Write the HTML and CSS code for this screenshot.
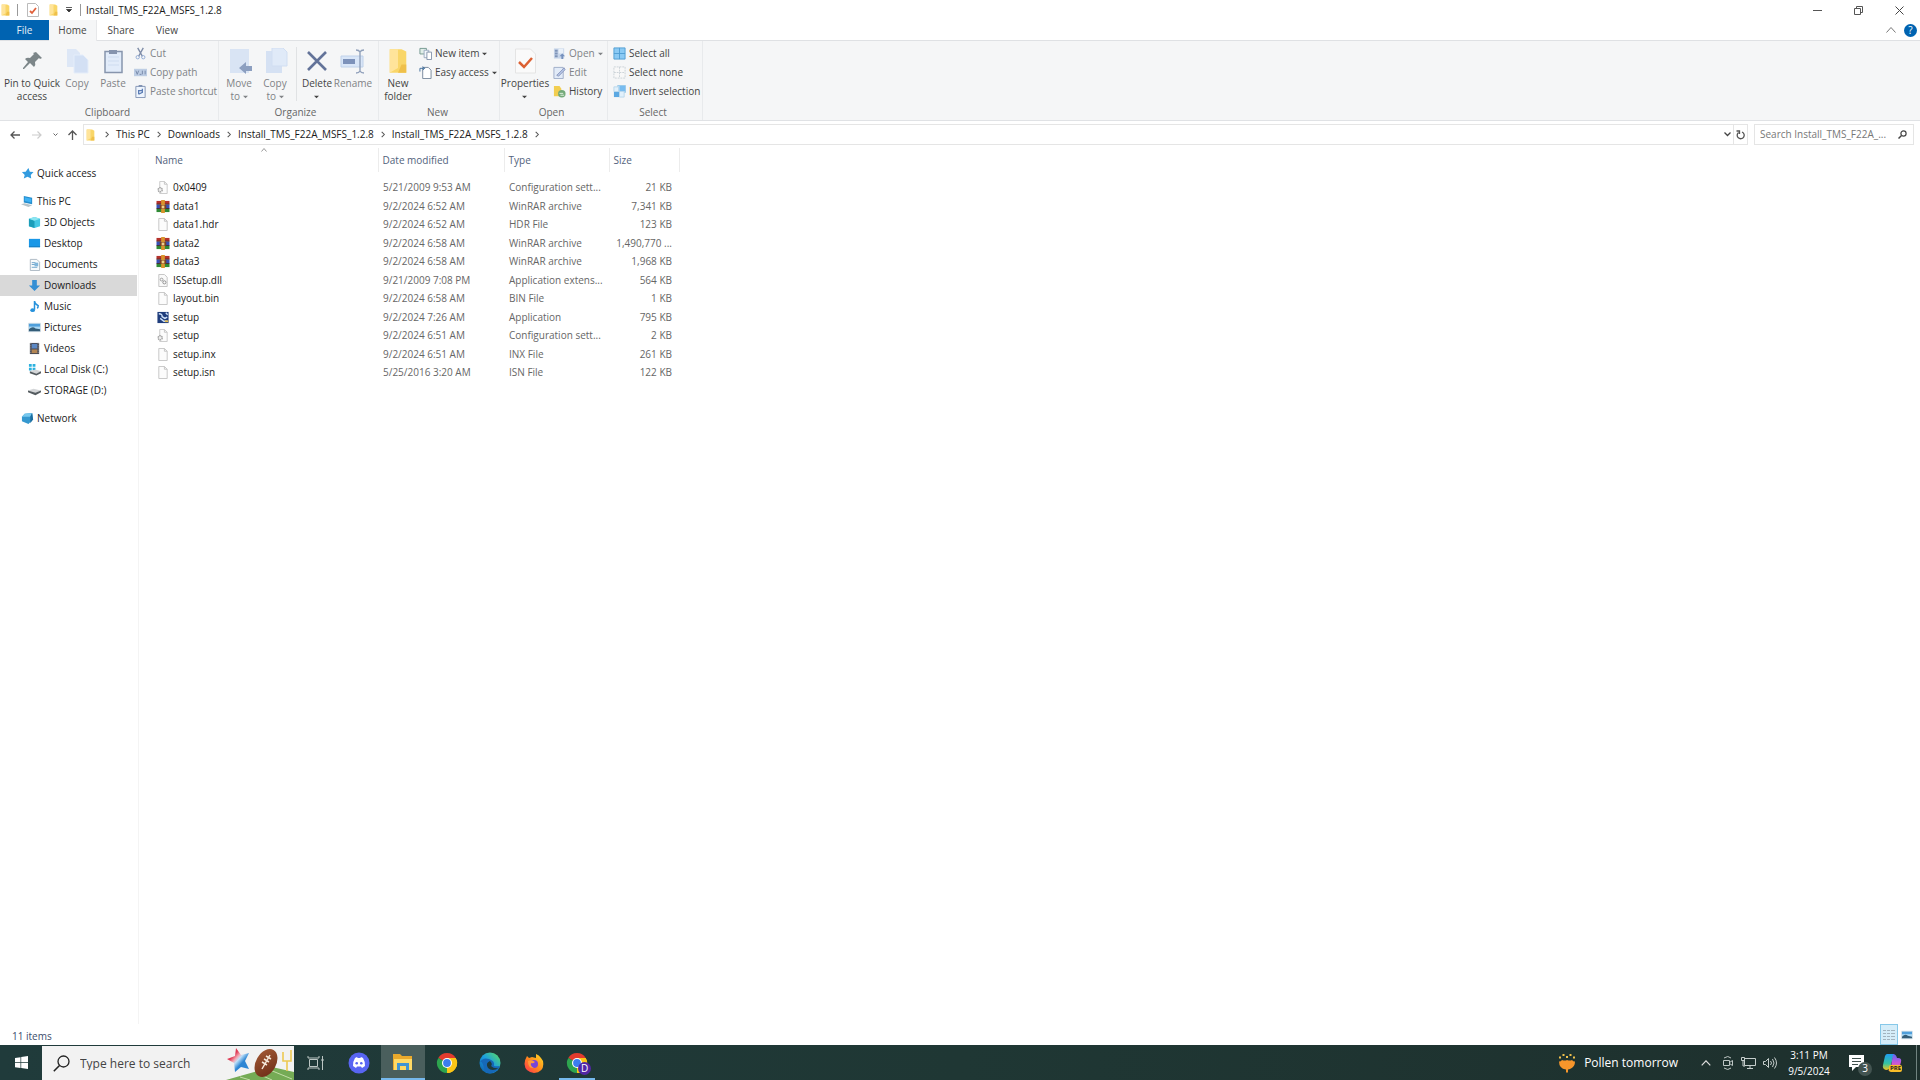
FILE: index.html
```html
<!DOCTYPE html>
<html lang="en">
<head>
    <meta charset="UTF-8">
    <meta name="viewport" content="width=device-width, initial-scale=1.0">
    <title>Install_TMS_F22A_MSFS_1.2.8</title>
    <link rel="stylesheet" href="styles.css">
</head>
<body>
    <!-- shared icons -->
    <svg class="defs" aria-hidden="true">
        <defs>
            <linearGradient id="star-fill" x1="0" y1="0" x2="1" y2="1"><stop offset=".3" stop-color="#df3a55"/><stop offset=".42" stop-color="#f3a9b4"/><stop offset=".5" stop-color="#bfe0f8"/><stop offset=".65" stop-color="#2e86d4"/></linearGradient>
            <linearGradient id="ball-fill" x1="0" y1="0" x2="1" y2="1"><stop offset="0" stop-color="#a45a35"/><stop offset="1" stop-color="#6b2c16"/></linearGradient>
            <linearGradient id="edge-fill" x1="0" y1="1" x2="1" y2="0"><stop offset="0" stop-color="#0c59a4"/><stop offset=".5" stop-color="#1b9de2"/><stop offset="1" stop-color="#5ee25a"/></linearGradient>
            <linearGradient id="fox-fill" x1="1" y1="0" x2="0" y2="1"><stop offset="0" stop-color="#ffe226"/><stop offset=".5" stop-color="#ff8a1c"/><stop offset="1" stop-color="#ff2a55"/></linearGradient>
            <linearGradient id="copilot-left" x1="0" y1="0" x2="0" y2="1"><stop offset="0" stop-color="#1f9cf0"/><stop offset=".6" stop-color="#36c4a0"/><stop offset="1" stop-color="#f3c51c"/></linearGradient>
            <linearGradient id="copilot-right" x1="0" y1="0" x2="0" y2="1"><stop offset="0" stop-color="#5a6cf0"/><stop offset=".5" stop-color="#c455dd"/><stop offset="1" stop-color="#ff8555"/></linearGradient>
        </defs>
        <symbol id="folder" viewBox="0 0 16 22"><path d="M1 1h10l4 2v18H1z" fill="#f9d668"/><path d="M1 1h7v16l-7 4z" fill="#ffe49a"/><path d="M11 14h4v7h-7z" fill="#efc04a"/></symbol>
        <symbol id="page" viewBox="0 0 14 14"><path d="M2.500.5h6l3 3v10h-9z" fill="#fcfcfc" stroke="#c4c4c4"/><path d="M8.500.5v3h3" fill="none" stroke="#c4c4c4"/></symbol>
        <symbol id="config" viewBox="0 0 14 14"><path d="M3.500.5h5l3 3v10h-8z" fill="#fcfcfc" stroke="#c8c8c8"/><path d="M8.500.5v3h3" fill="none" stroke="#c4c4c4"/><circle cx="4" cy="9.500" r="2.200" fill="#eee" stroke="#a2a2a2" stroke-width="1.500" stroke-dasharray="1.500 .6"/></symbol>
        <symbol id="dll" viewBox="0 0 14 14"><path d="M2.500.5h6l3 3v10h-9z" fill="#fafafa" stroke="#c0c0c0"/><circle cx="5.500" cy="6" r="1.500" fill="none" stroke="#999"/><circle cx="8.500" cy="9" r="1.700" fill="none" stroke="#888"/></symbol>
        <symbol id="rar" viewBox="0 0 14 14"><path d="M0 1h14v3.500H0z" fill="#b5312b"/><path d="M0 5h14v4H0z" fill="#3750b5"/><path d="M0 9.500h14V13H0z" fill="#2f8a35"/><path d="M0 4.500h14M0 9.200h14" stroke="#382126"/><path d="M5 0h4v14H5z" fill="#d9942c"/><path d="M3.500 5.500h7v4h-7z" fill="#7b4023"/><path d="M5.500 6h3v3h-3z" fill="#efd28a"/></symbol>
        <symbol id="setup" viewBox="0 0 14 14"><path d="M1 1h12v12H1z" fill="#1f3d7c"/><path d="M2.500 3q4 0 3.500 3l3 2 2.500-1.500M4 8l4 3h3.500M10 2l2 2" fill="none" stroke="#cfe2fa" stroke-width="1.500"/><path d="M9 10h3.500v2H9z" fill="#e3bd55"/></symbol>
        <symbol id="caret" viewBox="0 0 6 4"><path d="M0 .5h6L3 3.500z" fill="currentColor"/></symbol>
        <symbol id="chevron" viewBox="0 0 6 8"><path d="M1.500 1 4.500 4 1.500 7" fill="none" stroke="#555" stroke-width="1.200"/></symbol>
        <symbol id="task-chrome" viewBox="0 0 22 22"><path d="M11 11 2.300 6A10 10 0 0 1 19.700 6z" fill="#e33b2e"/><path d="M11 11 19.700 6A10 10 0 0 1 11 21z" fill="#fbc516"/><path d="M11 11V21A10 10 0 0 1 2.300 6z" fill="#2da44e"/><path d="M11 6h8.700A10 10 0 0 1 11 21l4.300-7.500z" fill="#fbc516"/><circle cx="11" cy="11" r="5" fill="#fff"/><circle cx="11" cy="11" r="3.900" fill="#3b7ded"/></symbol>
        <symbol id="photo" viewBox="0 0 14 12"><path d="M.5 1.500h13v9H.5z" fill="#a9d8f5" stroke="#d5dde3"/><path d="M1 2h12v3H1z" fill="#4f9fdb"/><path d="M1 8q4-4 7-1l5 1v2H1z" fill="#345d78"/></symbol>
    </svg>

    <div class="window">
        <header class="titlebar">
            <svg class="mini-folder"><use href="#folder"/></svg>
            <span class="divider"></span>
            <button class="quick" aria-label="Properties"><svg width="12" height="14" viewBox="0 0 12 14"><path d="M.5.5h8l3 3v10H.5z" fill="#fff" stroke="#bbb"/><path d="m3 8 2 2 4-5" fill="none" stroke="#e0603a" stroke-width="1.800"/></svg></button>
            <button class="quick" aria-label="New folder"><svg class="mini-folder"><use href="#folder"/></svg></button>
            <button class="customize" aria-label="Customize toolbar"><svg width="6" height="6" viewBox="0 0 6 6"><path d="M0 .5h6M.5 2.500h5L3 5z" fill="#333" stroke="#333" stroke-width=".8"/></svg></button>
            <span class="divider"></span>
            <h1>Install_TMS_F22A_MSFS_1.2.8</h1>
            <div class="controls">
                <button aria-label="Minimize"><svg width="9" height="9" viewBox="0 0 9 9"><path d="M0 4.500h9" stroke="#555"/></svg></button>
                <button aria-label="Restore"><svg width="9" height="9" viewBox="0 0 9 9"><path d="M.5 2.500h6v6h-6zM2.500 2.500v-2h6v6h-2" fill="none" stroke="#555"/></svg></button>
                <button aria-label="Close"><svg width="9" height="9" viewBox="0 0 9 9"><path d="m.5.5 8 8m0-8-8 8" stroke="#444"/></svg></button>
            </div>
        </header>

        <nav class="tabs">
            <button class="tab file">File</button>
            <button class="tab active">Home</button>
            <button class="tab">Share</button>
            <button class="tab view">View</button>
            <div class="tab-tools">
                <button aria-label="Collapse ribbon"><svg width="10" height="6" viewBox="0 0 10 6"><path d="m.5 5.500 4.500-5 4.500 5" fill="none" stroke="#777"/></svg></button>
                <button class="help" aria-label="Help">?</button>
            </div>
        </nav>

        <div class="ribbon">
            <section class="group clipboard">
                <div class="tools">
                    <button class="big pin"><svg viewBox="0 0 26 26"><path d="m17 4 6 6-2 1-1-1-4 4q1 3-1 5l-4-4-6 6-1 0 0-1 5-6-3-3q2-2 5-1l4-4-1-1z" fill="#7c8689"/></svg><span>Pin to Quick<br>access</span></button>
                    <button class="big" disabled><svg viewBox="0 0 26 26"><path d="M3 1h9l4 4v14H3z" fill="#dde7f6"/><path d="M10 7h9l5 5v13H10z" fill="#d3e0f4" stroke="#e4edfa"/></svg><span>Copy</span></button>
                    <button class="big" disabled><svg viewBox="0 0 26 26"><path d="M5 3.500h17v21H5z" fill="#e2ecfa" stroke="#8795ad" stroke-width="1.500"/><path d="M9 2h8v4H9z" fill="#8694ae"/><path d="M8 9h11M8 13h11M8 17h11" stroke="#cedcf0"/></svg><span>Paste</span></button>
                    <div class="list">
                        <button disabled><svg viewBox="0 0 14 14"><path d="m4 1 5 9m1-9-5 9" stroke="#7f8da8" stroke-width="1.500"/><circle cx="4" cy="11" r="1.800" fill="none" stroke="#8fa9d2"/><circle cx="10" cy="11" r="1.800" fill="none" stroke="#8fa9d2"/></svg>Cut</button>
                        <button disabled><svg viewBox="0 0 14 14"><path d="M0 3h14v8H0z" fill="#bdcde4"/><path d="m2 5 1.500 4L5 5m1 4h2m1-4v4m3-4v4" fill="none" stroke="#7587a7"/></svg>Copy path</button>
                        <button disabled><svg viewBox="0 0 14 14"><path d="M2 1.500h10v12H2z" fill="#edf4fd" stroke="#8193b3"/><path d="M5 0h4v2H5z" fill="#8193b3"/><path d="M5 10V6h4M9 4v4L5 10" fill="none" stroke="#5c7db5" stroke-width="1.400"/></svg>Paste shortcut</button>
                    </div>
                </div>
                <h2>Clipboard</h2>
            </section>
            <section class="group organize">
                <div class="tools">
                    <button class="big" disabled><svg viewBox="0 0 26 26"><path d="M4 1h19v24H4z" fill="#d9e4f4"/><path d="m13 20 7-6v4h7v5h-7v3z" fill="#8c9fc0"/></svg><span>Move<br>to <svg class="caret"><use href="#caret"/></svg></span></button>
                    <button class="big" disabled><svg viewBox="0 0 26 26"><path d="M4 3h16v22H4z" fill="#d5e1f3"/><path d="M10 0h11l4 4v14H10z" fill="#e0eaf8" stroke="#d1def2"/></svg><span>Copy<br>to <svg class="caret"><use href="#caret"/></svg></span></button>
                    <span class="rule"></span>
                    <button class="big"><svg viewBox="0 0 26 26"><path d="m4 4 18 18M22 4 4 22" stroke="#637399" stroke-width="2.600"/></svg><span>Delete<br><svg class="caret"><use href="#caret"/></svg></span></button>
                    <button class="big" disabled><svg viewBox="0 0 26 26"><path d="M1 8h22v11H1z" fill="#d9e6f8" stroke="#c0d2ea"/><path d="M3 11h12v5H3z" fill="#7d92ba"/><path d="M16 2q3 0 4 2 1-2 4-2M20 4v19m-4 2q3 0 4-2 1 2 4 2" fill="none" stroke="#91a1bb" stroke-width="1.400"/></svg><span>Rename</span></button>
                </div>
                <h2>Organize</h2>
            </section>
            <section class="group new">
                <div class="tools">
                    <button class="big"><svg><use href="#folder"/></svg><span>New<br>folder</span></button>
                    <div class="list">
                        <button><svg viewBox="0 0 14 14"><path d="M1 1.500h7v6H1z" fill="#e1eee9" stroke="#71968d"/><path d="M5.500 3.500h5v8h-5z" fill="#f4f8fc" stroke="#9babc0"/><path d="M8.500 5.500h5v8h-5z" fill="#fff" stroke="#8292aa"/></svg>New item <svg class="caret"><use href="#caret"/></svg></button>
                        <button><svg viewBox="0 0 14 14"><path d="M4 1.500h6l3 3v9H4z" fill="#fff" stroke="#76869b"/><path d="M1 6V2.500h5M4 .5l2 2-2 2" fill="none" stroke="#3c6c9c"/></svg>Easy access <svg class="caret"><use href="#caret"/></svg></button>
                    </div>
                </div>
                <h2>New</h2>
            </section>
            <section class="group open">
                <div class="tools">
                    <button class="big properties"><svg viewBox="0 0 26 26"><path d="M3.500 1h15l5 5v19h-20z" fill="#fafafa" stroke="#e4e4e4"/><path d="m7 14 5 5 8-9" fill="none" stroke="#dc6032" stroke-width="2.500"/></svg><span>Properties<br><svg class="caret"><use href="#caret"/></svg></span></button>
                    <div class="list">
                        <button disabled><svg viewBox="0 0 14 14"><path d="M1 1.500h11v11H1z" fill="#c8d6ea"/><path d="M2 3h3v2H2zm0 3h3v2H2zm0 3h3v2H2z" fill="#7f94b8"/><path d="M6 2h5v5H6z" fill="#e9f0f9"/><path d="m7 10 3-3 3 3h-2v3H9v-3z" fill="#7590bd"/></svg>Open <svg class="caret"><use href="#caret"/></svg></button>
                        <button disabled><svg viewBox="0 0 14 14"><path d="M1 1.500h10v12H1z" fill="#e2ebf8" stroke="#9eacc7"/><path d="m4 10 8-8 1 2-7 7z" fill="#b4c4e4" stroke="#8d9bc0"/></svg>Edit</button>
                        <button><svg viewBox="0 0 14 14"><path d="M1 1h6l2 3v8H1z" fill="#f2ce50"/><circle cx="9.500" cy="9.500" r="4" fill="#72a979"/><path d="M7 9h4m-3 2h4" stroke="#e7f4e6"/></svg>History</button>
                    </div>
                </div>
                <h2>Open</h2>
            </section>
            <section class="group select">
                <div class="tools">
                    <div class="list">
                        <button><svg viewBox="0 0 14 14"><path d="M1 1h12v12H1z" fill="#8bcaf4"/><path d="M1 1h12v12H1zM7 1v12M1 7h12" fill="none" stroke="#509ed3"/></svg>Select all</button>
                        <button><svg viewBox="0 0 14 14"><path d="M1 1h12v12H1zM7 1v12M1 7h12" fill="#f8f8f8" stroke="#c9d0d6" stroke-dasharray="2 1"/></svg>Select none</button>
                        <button><svg viewBox="0 0 14 14"><path d="M5 .5h8.500V8H5z" fill="#bce1fa" stroke="#98c8e8"/><path d="M7 1h6v6H7z" fill="#78bcf0"/><path d="M1 7h6v6H1z" fill="#5ba8e2"/><path d="M7 7h5v6H7zM1 2h5v5H1z" fill="#e1f0fb" stroke="#b9d7ec"/></svg>Invert selection</button>
                    </div>
                </div>
                <h2>Select</h2>
            </section>
        </div>

        <div class="location">
            <div class="history">
                <button aria-label="Back"><svg width="10" height="8" viewBox="0 0 10 8"><path d="M10 4H1m3.500-3.500L1 4l3.500 3.500" fill="none" stroke="#555" stroke-width="1.300"/></svg></button>
                <button aria-label="Forward"><svg width="10" height="8" viewBox="0 0 10 8"><path d="M0 4h9M5.500.5 9 4 5.500 7.500" fill="none" stroke="#ccc" stroke-width="1.200"/></svg></button>
                <button class="recent" aria-label="Recent locations"><svg width="5" height="4" viewBox="0 0 5 4"><path d="m.5.5 2 2 2-2" fill="none" stroke="#666"/></svg></button>
                <button class="up" aria-label="Up"><svg width="9" height="10" viewBox="0 0 9 10"><path d="M4.500 10V1M.5 5l4-4 4 4" fill="none" stroke="#555" stroke-width="1.300"/></svg></button>
            </div>
            <div class="address">
                <svg class="mini-folder"><use href="#folder"/></svg>
                <svg class="chevron"><use href="#chevron"/></svg>
                <a href="#">This PC</a>
                <svg class="chevron"><use href="#chevron"/></svg>
                <a href="#">Downloads</a>
                <svg class="chevron"><use href="#chevron"/></svg>
                <a href="#">Install_TMS_F22A_MSFS_1.2.8</a>
                <svg class="chevron"><use href="#chevron"/></svg>
                <a href="#">Install_TMS_F22A_MSFS_1.2.8</a>
                <svg class="chevron"><use href="#chevron"/></svg>
                <button class="previous" aria-label="Previous locations"><svg width="7" height="5" viewBox="0 0 7 5"><path d="m.5.5 3 3 3-3" fill="none" stroke="#444" stroke-width="1.300"/></svg></button>
                <button class="refresh" aria-label="Refresh"><svg width="9" height="10" viewBox="0 0 9 10"><path d="M6 2a3.500 3.500 0 1 1-3.500.5M.5 1h3v3" fill="none" stroke="#555" stroke-width="1.300"/></svg></button>
            </div>
            <label class="search">
                <input type="text" aria-label="Search folder" placeholder="Search Install_TMS_F22A_...">
                <svg width="9" height="9" viewBox="0 0 9 9"><circle cx="5.500" cy="3.500" r="2.600" fill="none" stroke="#444" stroke-width="1.200"/><path d="M3.500 5.500.5 8.500" stroke="#444" stroke-width="1.500"/></svg>
            </label>
        </div>

        <main class="content">
            <nav class="sidebar">
                <a class="root" href="#"><svg viewBox="0 0 14 14"><path d="m8 1 1.500 4 4 .5-3 3 .5 4-4-2-4 2 1-4-3-3 4-.5z" fill="#329bdf"/></svg>Quick access</a>
                <a class="root" href="#"><svg viewBox="0 0 14 14"><path d="m3 1 9 2v7l-9-2z" fill="#258dcc"/><path d="m4 2.500 7 1.500v4L4 6.500z" fill="#3db1f4"/><path d="m0 10 4-1 8 2-4 2z" fill="#b7c4ca"/></svg>This PC</a>
                <a href="#"><svg viewBox="0 0 14 14"><path d="m1 3 6-2 6 2v8l-6 2-6-2z" fill="#44c7e4"/><path d="m1 3 6 2v8l-6-2z" fill="#1b9db9"/><path d="m1 3 6-2 6 2-6 2z" fill="#8ce5f0"/></svg>3D Objects</a>
                <a href="#"><svg viewBox="0 0 14 14"><path d="M1 2h12v9H1z" fill="#1997e7"/><path d="M1 10h12v1H1z" fill="#147abd"/></svg>Desktop</a>
                <a href="#"><svg viewBox="0 0 14 14"><path d="M2.500 1.500h7l3 3v9h-10z" fill="#f7fafc" stroke="#aab7c1"/><path d="M4 5h4m-4 2h6m-6 3h6" stroke="#6ba2c9"/><path d="M7 5h4v4H7z" fill="#81b6db"/></svg>Documents</a>
                <a class="selected" href="#"><svg viewBox="0 0 14 14"><path d="M4.500 1h5v6H13l-6 6-6-6h3.500z" fill="#348fd4"/></svg>Downloads</a>
                <a href="#"><svg viewBox="0 0 14 14"><path d="M7 1v9.500M7 1q0 3 4 5 0 2-1 3" fill="none" stroke="#2792dc" stroke-width="1.600"/><ellipse cx="5" cy="11" rx="2.500" ry="2" fill="#2792dc"/></svg>Music</a>
                <a href="#"><svg viewBox="0 0 14 12"><use href="#photo"/></svg>Pictures</a>
                <a href="#"><svg viewBox="0 0 14 14"><path d="M2 1h10v12H2z" fill="#454651"/><path d="M4 2h6v5H4z" fill="#5c88c4"/><path d="M4 8h6v4H4z" fill="#b38553"/><path d="M3 1v12m8-12v12" stroke="#aaa" stroke-dasharray="1 1"/></svg>Videos</a>
                <a href="#"><svg viewBox="0 0 14 14"><path d="M1 1h3v3H1zm4 0h3v3H5zM1 5h3v3H1zm4 0h3v3H5z" fill="#2bb1df"/><path d="m2 9 6-2 6 2-5 3z" fill="#d4d6d8"/><path d="m2 9 7 2.500L14 9v2l-5 2.500L2 11z" fill="#555c60"/></svg>Local Disk (C:)</a>
                <a href="#"><svg viewBox="0 0 14 14"><path d="m0 7 6-2 8 2-6 3z" fill="#d4d6d8"/><path d="m0 7 8 2.500L14 7v2l-6 3L0 9z" fill="#555c60"/></svg>STORAGE (D:)</a>
                <a class="root" href="#"><svg viewBox="0 0 14 14"><path d="m4 2 8-1 1 7-5 5-7-3V5z" fill="#3598cf"/><path d="m4 2 8-1-2 4H1z" fill="#77c8ee"/><path d="m10 5 2-4 1 7-3 4z" fill="#1d6d9e"/></svg>Network</a>
            </nav>

            <div class="files">
                <table>
                    <thead>
                        <tr>
                            <th class="name">Name<svg class="sort" width="6" height="4" viewBox="0 0 6 4"><path d="m.5 3.500 2.500-3 2.500 3" fill="none" stroke="#999"/></svg></th>
                            <th class="date">Date modified</th>
                            <th class="type">Type</th>
                            <th class="size">Size</th>
                        </tr>
                    </thead>
                    <tbody>
                        <tr><td><svg><use href="#config"/></svg>0x0409</td><td>5/21/2009 9:53 AM</td><td>Configuration sett...</td><td>21 KB</td></tr>
                        <tr><td><svg><use href="#rar"/></svg>data1</td><td>9/2/2024 6:52 AM</td><td>WinRAR archive</td><td>7,341 KB</td></tr>
                        <tr><td><svg><use href="#page"/></svg>data1.hdr</td><td>9/2/2024 6:52 AM</td><td>HDR File</td><td>123 KB</td></tr>
                        <tr><td><svg><use href="#rar"/></svg>data2</td><td>9/2/2024 6:58 AM</td><td>WinRAR archive</td><td>1,490,770 ...</td></tr>
                        <tr><td><svg><use href="#rar"/></svg>data3</td><td>9/2/2024 6:58 AM</td><td>WinRAR archive</td><td>1,968 KB</td></tr>
                        <tr><td><svg><use href="#dll"/></svg>ISSetup.dll</td><td>9/21/2009 7:08 PM</td><td>Application extens...</td><td>564 KB</td></tr>
                        <tr><td><svg><use href="#page"/></svg>layout.bin</td><td>9/2/2024 6:58 AM</td><td>BIN File</td><td>1 KB</td></tr>
                        <tr><td><svg><use href="#setup"/></svg>setup</td><td>9/2/2024 7:26 AM</td><td>Application</td><td>795 KB</td></tr>
                        <tr><td><svg><use href="#config"/></svg>setup</td><td>9/2/2024 6:51 AM</td><td>Configuration sett...</td><td>2 KB</td></tr>
                        <tr><td><svg><use href="#page"/></svg>setup.inx</td><td>9/2/2024 6:51 AM</td><td>INX File</td><td>261 KB</td></tr>
                        <tr><td><svg><use href="#page"/></svg>setup.isn</td><td>5/25/2016 3:20 AM</td><td>ISN File</td><td>122 KB</td></tr>
                    </tbody>
                </table>
            </div>
        </main>

        <footer class="status">
            <span>11 items</span>
            <div class="views">
                <button class="on" aria-label="Details"><svg width="12" height="12" viewBox="0 0 12 12"><path d="M0 1.500h3m1 0h3m1 0h4M0 4.500h3m1 0h3m1 0h4M0 7.500h3m1 0h3m1 0h4M0 10.500h3m1 0h3m1 0h4" stroke="#a3b4bf"/></svg></button>
                <button aria-label="Large icons"><svg width="12" height="10"><use href="#photo"/></svg></button>
            </div>
        </footer>
    </div>

    <footer class="taskbar">
        <button class="start" aria-label="Start"><svg width="13" height="13" viewBox="0 0 13 13"><path d="m0 2 5.500-.8v5H0zM6.200 1 13 0v6.200H6.200zM0 7h5.500v5L0 11.200zm6.200 0H13v6l-6.800-.9z" fill="#fff"/></svg></button>
        <label class="task-search">
            <svg width="17" height="17" viewBox="0 0 17 17"><circle cx="10.500" cy="6.500" r="5.500" fill="none" stroke="#222" stroke-width="1.300"/><path d="M6.500 10.500.8 16.200" stroke="#222" stroke-width="1.500"/></svg>
            <input type="text" aria-label="Search Windows" placeholder="Type here to search">
            <svg class="football" width="68" height="33" viewBox="0 0 68 33">
                <path d="M0 33Q22 27 46 20L68 25v8z" fill="#75ab55"/>
                <path d="m14 30 10 3m6-7 16 7m-2-10 22 9" stroke="#c3dda7"/>
                <path d="M57 5v9h8V3m-4 11v10" fill="none" stroke="#edc952" stroke-width="1.600"/>
                <path d="m10 1 5 7 8-2-4 8 4 8-8-2-6 5-1-9-7-4 8-3z" fill="url(#star-fill)"/>
                <ellipse cx="40" cy="16" rx="10" ry="15" transform="rotate(30 40 16)" fill="url(#ball-fill)"/>
                <path d="m36 22 8-14m-8 7 5 3m-3-6 5 3m-3-6 5 3" stroke="#f4e7d8" stroke-width="1.500"/>
            </svg>
        </label>
        <nav class="apps">
            <button aria-label="Task view"><svg width="18" height="16" viewBox="0 0 18 16"><path d="M2.500 4.500h8v7h-8zM1 1v2h11V1M1 15v-2h11v2M15.500 1v14M14 5h3" fill="none" stroke="#bcc6c4"/></svg></button>
            <button aria-label="Discord"><svg width="22" height="22" viewBox="0 0 22 22"><circle cx="11" cy="11" r="10.500" fill="#5865f2"/><path d="m7 6 2-1 .7 1h2.600l.7-1 2 1q2 3 2 8l-3 2-1-1.500H9L8 16l-3-2q0-5 2-8z" fill="#fff"/><circle cx="8.700" cy="11.200" r="1.300" fill="#5865f2"/><circle cx="13.300" cy="11.200" r="1.300" fill="#5865f2"/></svg></button>
            <button class="current" aria-label="File Explorer"><svg width="20" height="18" viewBox="0 0 20 18"><path d="M0 1h7l2 2h10v14H0z" fill="#e9a92c"/><path d="M1 6h18v11H1z" fill="#ffd965"/><path d="M4 17v-7h12v7h-3v-4H7v4z" fill="#4194d4"/></svg></button>
            <button aria-label="Chrome"><svg width="22" height="22"><use href="#task-chrome"/></svg></button>
            <button aria-label="Edge"><svg width="22" height="22" viewBox="0 0 22 22"><circle cx="11" cy="11" r="10.500" fill="url(#edge-fill)"/><path d="M1 10Q4 5 10 7q6 2 5 6-1 2 6 1-3 7-10 7.500-6 0-6.500-7Q3 9 1 10z" fill="#1668b8"/><path d="M12 14q2-2-1-5-5 2-2 7 4 4 11 0-5 1-8-2z" fill="#203a39"/></svg></button>
            <button aria-label="Firefox"><svg width="20" height="20" viewBox="0 0 20 20"><path d="m3 3 2 2 3-1 4 1V1q3 1 5 4l2 3q2 11-9 12-9-1-9.500-9Q1 6 3 3z" fill="url(#fox-fill)"/><circle cx="10" cy="11" r="4" fill="#7845d8"/><path d="M4 8q4-2 7 1-2 2-4 1-1 3 3 5-6 1-6-7z" fill="#ff993d"/></svg></button>
            <button class="running" aria-label="Chrome, profile D"><svg width="22" height="22"><use href="#task-chrome"/></svg><span class="profile">D</span></button>
        </nav>
        <div class="tray">
            <button class="weather"><svg width="18" height="20" viewBox="0 0 18 20"><path d="M1 8.500q2 0 3-1.500 3 1 5 0 3 1 5 0 1 1.500 3 1.500 0 5-4 7-2 1-3 1v3H8v-3q-7-1-7-8z" fill="#f7962b"/><path d="M2 5.500v-2M5.500 3V1M9 5V3m3.500 0V1M16 5.500v-2" stroke="#efc04c" stroke-width="2"/></svg>Pollen tomorrow</button>
            <button class="hidden-icons" aria-label="Show hidden icons"><svg width="10" height="6" viewBox="0 0 10 6"><path d="m.7 5.300 4.300-4.500 4.300 4.500" fill="none" stroke="#ddd" stroke-width="1.200"/></svg></button>
            <button class="tray-icon" aria-label="Meet now"><svg width="10" height="14" viewBox="0 0 10 14"><path d="M.5 4.500h6v5h-6zM6.500 6.500l3-2v5l-3-2M1 2q4-3 7 0M1 12q4 3 7 0" fill="none" stroke="#bdc6c4"/></svg></button>
            <button class="tray-icon" aria-label="Network"><svg width="15" height="12" viewBox="0 0 15 12"><path d="M3.500 1.500h11v7h-11zM9 8.500v3m-3 0h6M.5.500h3v3h-3zM2 3.500V9h2" fill="none" stroke="#c6cecc"/></svg></button>
            <button class="tray-icon" aria-label="Volume"><svg width="14" height="12" viewBox="0 0 14 12"><path d="M.5 4.500h2l3-3v9l-3-3h-2zM7.500 4q2 2 0 4m2-6q3 4 0 8m2-9.500q4 5.500 0 11" fill="none" stroke="#c6cecc"/></svg></button>
            <button class="clock">3:11 PM<br>9/5/2024</button>
            <button class="notifications" aria-label="3 notifications"><svg width="16" height="16" viewBox="0 0 16 16"><path d="M0 0h15v12H7l-4 4v-4H0z" fill="#fff"/><path d="M3 3.500h9m-9 3h9m-9 3h6" stroke="#40514e"/></svg><span>3</span></button>
            <button class="copilot" aria-label="Copilot"><svg width="20" height="19" viewBox="0 0 20 19"><path d="M5 1h7L8 15q-1 2-4 2-4-1-3-5L3 3q1-2 2-2z" fill="url(#copilot-left)"/><path d="M11 1q3 0 4 4h1q4 0 3 4l-2 7q-1 2-4 2H6q2-1 3-4z" fill="url(#copilot-right)"/></svg><span>PRE</span></button>
        </div>
    </footer>
</body>
</html>
```
FILE: styles.css
```css
* { box-sizing: border-box; }
body { margin: 0; height: 100vh; display: flex; flex-direction: column; background: #fff; color: #1a1a1a; font: 10px/13px "Open Sans", "Noto Sans", sans-serif; }
button { display: flex; align-items: center; justify-content: center; padding: 0; border: 0; background: none; color: inherit; font: inherit; }
h1, h2 { margin: 0; font: inherit; }
a { color: inherit; text-decoration: none; }
svg { flex-shrink: 0; }
.defs { position: absolute; width: 0; height: 0; }
.window { flex: 1; min-height: 0; display: flex; flex-direction: column; }
.mini-folder { width: 9px; height: 12px; }

.titlebar { display: flex; align-items: center; height: 20px; padding-left: 1px; }
.titlebar .divider { width: 1px; height: 12px; margin: 0 5px; background: #999; }
.titlebar .mini-folder + .divider { margin-left: 7px; }
.titlebar .quick { width: 20px; }
.titlebar .customize { width: 12px; }
.titlebar h1 { white-space: nowrap; line-height: 20px; }
.controls { display: flex; margin-left: auto; }
.controls button { width: 41px; height: 20px; }

.tabs { display: flex; height: 21px; border-bottom: 1px solid #dfe1e4; color: #444; }
.tab { width: 48px; height: 20px; }
.tab.file { width: 49px; background: #0063b1; color: #e5f0f8; }
.tab.active { height: 21px; padding-bottom: 1px; background: #f5f6f7; border-right: 1px solid #e7e8ea; }
.tab.view { width: 44px; }
.tab-tools { display: flex; align-items: center; gap: 8px; margin-left: auto; padding-right: 3px; }
.help { width: 13px; height: 13px; border-radius: 50%; background: #0063b1; color: #fff; }

.ribbon { display: flex; height: 80px; background: #f5f6f7; border-bottom: 1px solid #e0e2e5; }
.group { display: flex; flex-direction: column; justify-content: space-between; border-right: 1px solid #e8eaec; padding-top: 3px; }
.group h2 { padding-right: 4px; text-align: center; color: #666; line-height: 15px; }
.tools { display: flex; }
.clipboard { width: 219px; padding-left: 5px; }
.clipboard h2, .organize h2 { padding-right: 8px; }
.organize { width: 160px; padding-left: 2px; }
.new { width: 121px; padding-left: 1px; }
.open { width: 108px; }
.select { width: 95px; }
.big { flex-direction: column; flex-shrink: 0; justify-content: flex-start; width: 36px; height: 60px; padding-top: 4px; text-align: center; color: #444; white-space: nowrap; }
.big > svg { width: 26px; height: 26px; margin-bottom: 3px; }
.big:disabled, .list button:disabled { color: #808386; }
.caret { width: 5px; height: 4px; vertical-align: middle; }
.pin { width: 54px; }
.properties { width: 50px; }
.rule { width: 1px; height: 54px; margin: 3px 2px 0 3px; background: #e0e2e4; }
.list { padding: 0 3px; }
.list button { height: 19px; gap: 3px; color: #444; white-space: nowrap; justify-content: flex-start; }
.list button > svg:first-child { width: 13px; height: 13px; }
.select .list { padding-left: 5px; }

.location { display: flex; align-items: center; height: 27px; }
.history { display: flex; width: 83px; padding-left: 4px; }
.history button { width: 22px; height: 20px; }
.history .recent { width: 14px; }
.history .up { width: 20px; }
.address { flex: 1; display: flex; align-items: center; height: 21px; border: 1px solid #e5e5e5; padding-left: 2px; white-space: nowrap; }
.address .mini-folder { margin-right: 3px; }
.chevron { width: 18px; height: 7px; }
.previous { width: 12px; margin-left: auto; }
.refresh { width: 14px; height: 19px; border-left: 1px solid #e5e5e5; }
.search { display: flex; align-items: center; width: 160px; height: 21px; margin: 0 6px; padding: 0 6px 0 5px; border: 1px solid #e5e5e5; }
input { flex: 1; min-width: 0; padding: 0; border: 0; outline: 0; background: none; color: inherit; font: inherit; }
input::placeholder { color: #777; opacity: 1; }

.content { flex: 1; min-height: 0; display: flex; }
.sidebar { width: 139px; padding-top: 15px; border-right: 1px solid #f4f4f4; }
.sidebar a { display: flex; align-items: center; gap: 3px; width: 137px; height: 21px; padding-left: 28px; white-space: nowrap; }
.sidebar a.root { padding-left: 21px; }
.sidebar a + .root { margin-top: 7px; }
.sidebar .selected { background: #d9d9d9; }
.sidebar svg { width: 13px; height: 13px; }
.files { flex: 1; }
table { width: 540px; table-layout: fixed; border-collapse: collapse; }
th { position: relative; height: 24px; padding: 0 4px; border-right: 1px solid #ececec; text-align: left; font-weight: normal; color: #52627c; }
thead::after { content: ""; display: block; height: 6px; }
th.name { width: 239px; padding-left: 16px; }
th.date { width: 126px; }
th.type { width: 105px; }
th.size { width: 70px; }
.sort { position: absolute; left: 122px; top: 0; }
td { height: 19px; padding: 0 5px; color: #666; white-space: nowrap; }
tr:nth-child(even) td { height: 18px; }
td:first-child { padding-left: 17px; color: #1a1a1a; }
td:last-child { padding-right: 7px; text-align: right; }
td svg { width: 14px; height: 13px; margin-right: 3px; vertical-align: top; }

.status { display: flex; align-items: flex-end; justify-content: space-between; height: 21px; padding: 0 4px 0 12px; color: #3c4c6c; line-height: 17px; }
.views { display: flex; }
.views button { width: 18px; height: 21px; }
.views .on { background: #d5edf9; border: 1px solid #86c8e9; }

.taskbar { display: flex; height: 35px; background: linear-gradient(90deg, #203b3b, #1f3734 50%, #1e302d); color: #fff; }
.start { width: 42px; }
.task-search { display: flex; align-items: center; width: 252px; margin-top: 1px; padding-left: 11px; background: #f2f2f2; color: #333; font-size: 12px; }
.task-search input { margin-left: 10px; }
.task-search input::placeholder { color: #444; }
.football { align-self: flex-end; }
.apps { display: flex; width: 305px; }
.apps button { position: relative; flex: 1; }
.current { background: #4a5f5d; border-bottom: 2px solid #76b9ed; }
.running::after { content: ""; position: absolute; left: 4px; right: 4px; bottom: 0; height: 2px; background: #76b9ed; }
.profile { position: absolute; right: 8px; bottom: 5px; width: 13px; height: 13px; border-radius: 50%; background: #5227a5; }
.tray { display: flex; margin: 0 3px 0 auto; padding-right: 8px; border-right: 1px solid #718380; }
.weather { gap: 8px; margin-right: 17px; font-size: 12px; }
.hidden-icons { width: 22px; }
.tray-icon { width: 21px; }
.clock { width: 58px; line-height: 16px; text-align: center; }
.notifications { position: relative; width: 38px; }
.notifications span { position: absolute; right: 4px; bottom: 4px; width: 14px; height: 14px; border-radius: 50%; background: #435451; }
.copilot { position: relative; width: 32px; }
.copilot span { position: absolute; right: 6px; bottom: 8px; padding: 0 1px; border-radius: 2px; background: #f9bd28; color: #222; font-size: 6px; line-height: 7px; font-weight: bold; }
```
